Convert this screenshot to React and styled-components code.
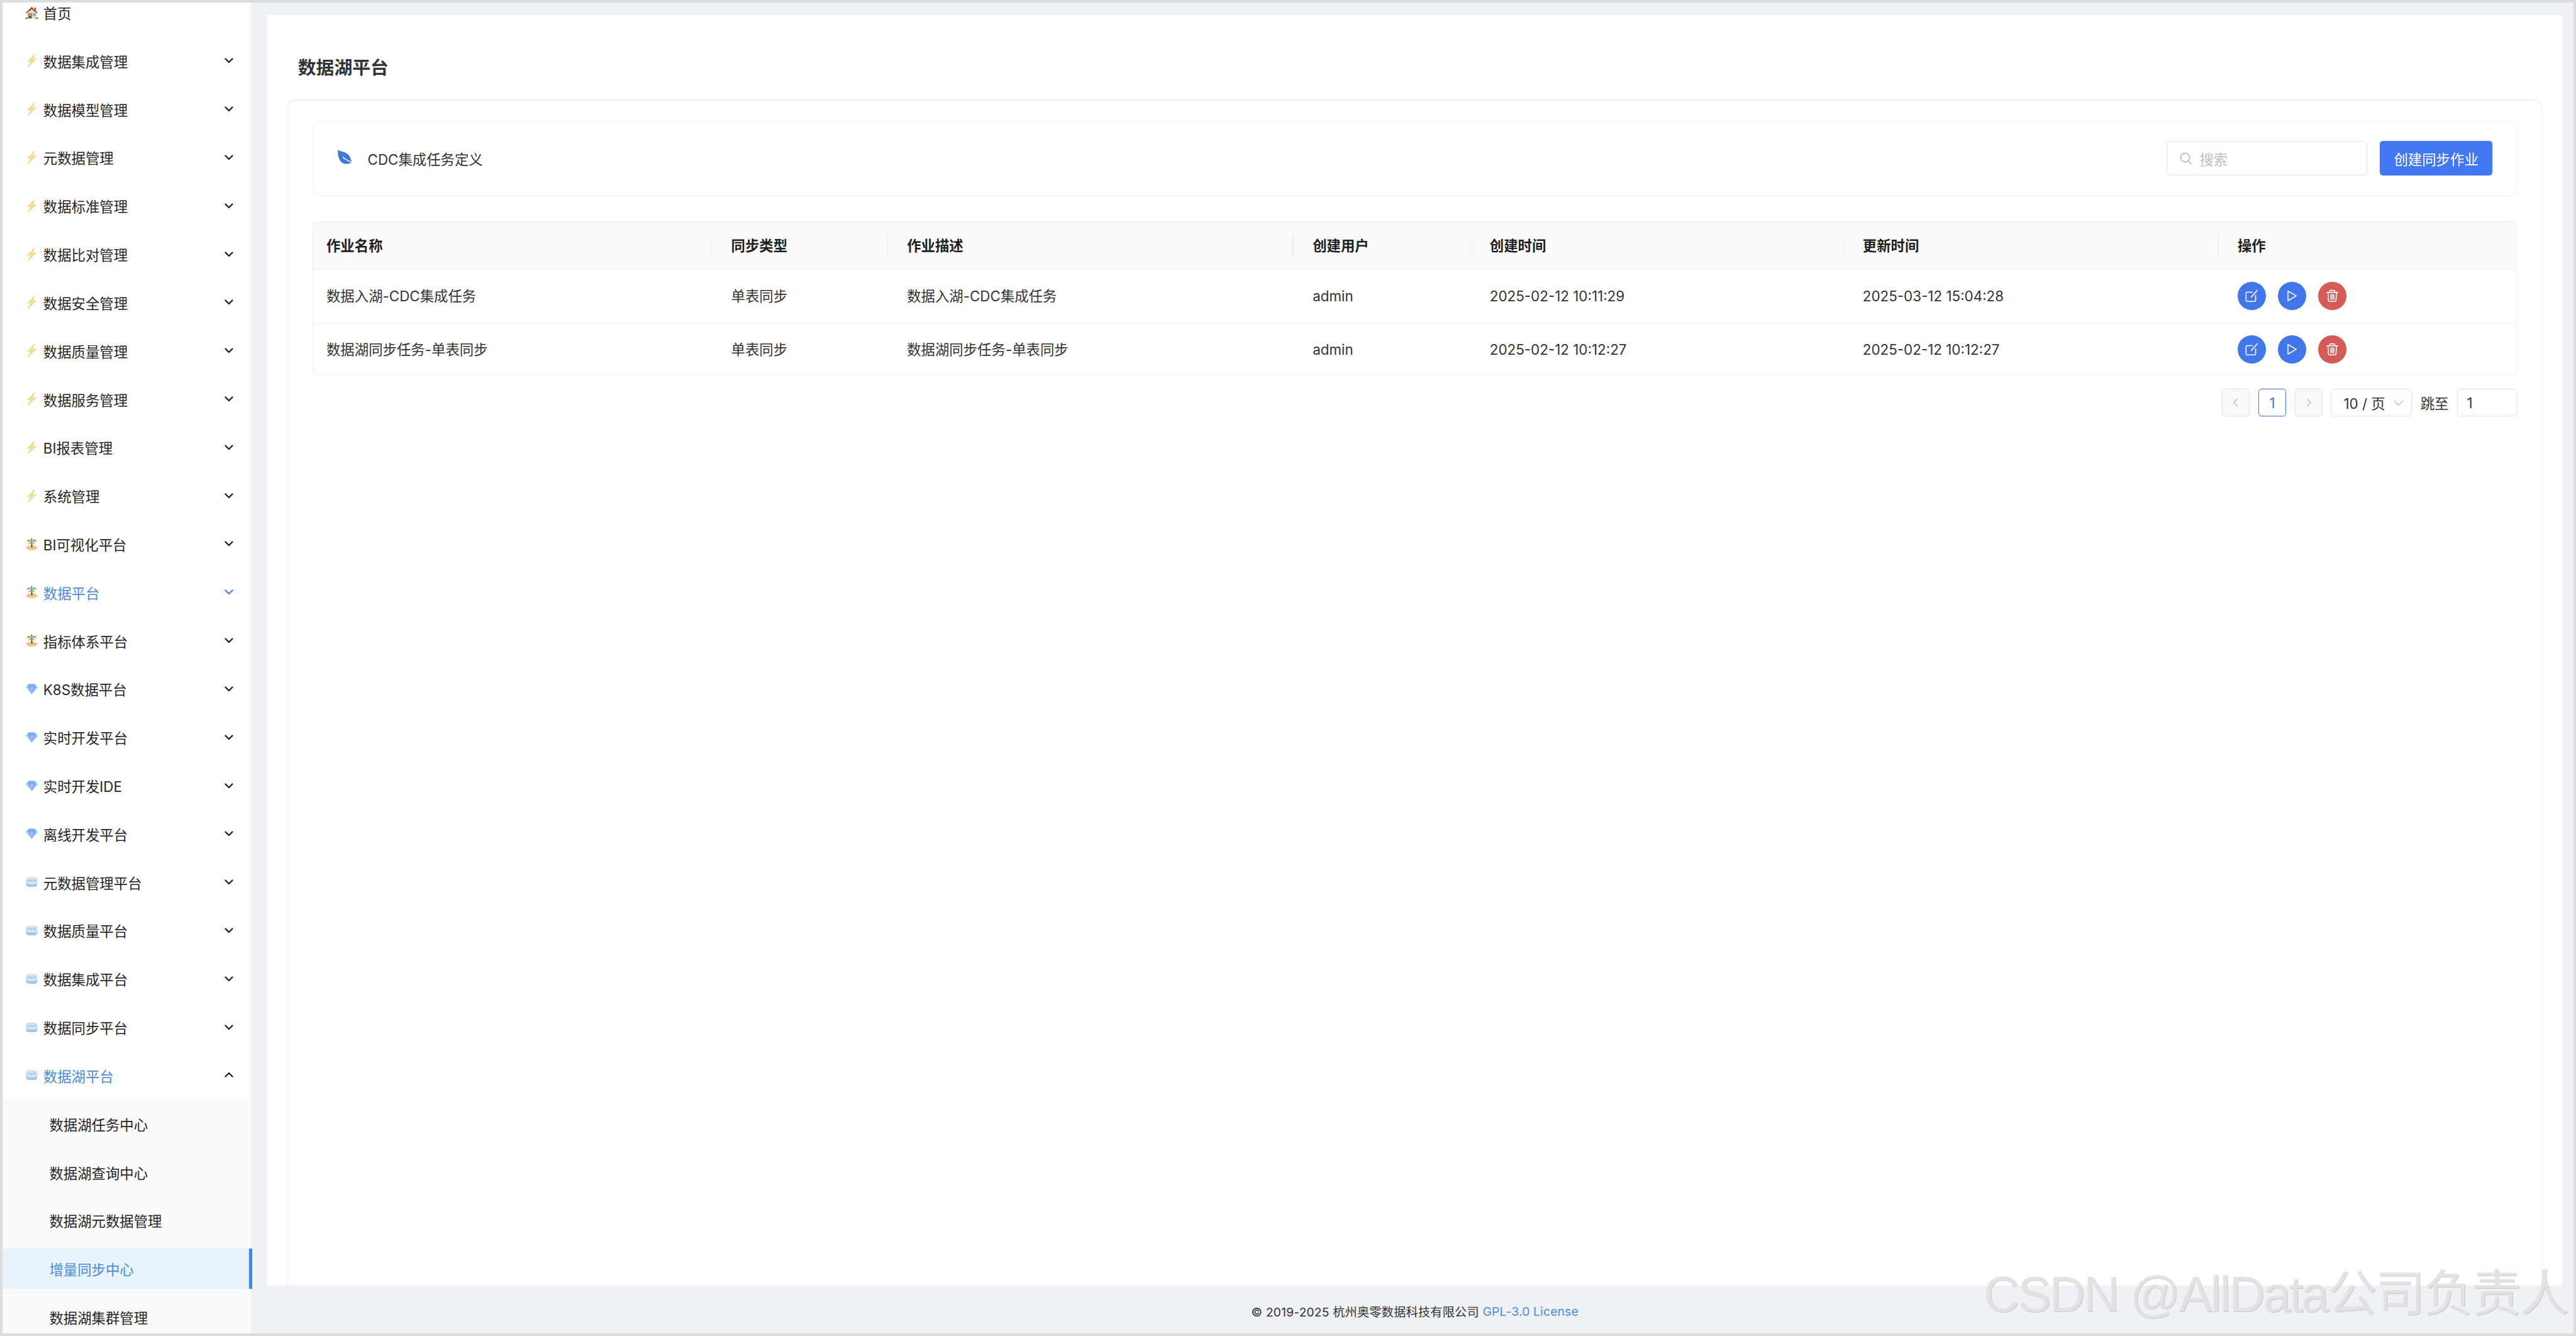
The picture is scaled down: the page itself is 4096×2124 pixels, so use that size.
import React from 'react';
import styled, { createGlobalStyle } from 'styled-components';

const Global = createGlobalStyle`
  html, body { margin: 0; padding: 0; background: #dcdcdc; }
  body { font-family: Inter, "Noto Sans CJK SC", sans-serif; color: #262626; }
  * { box-sizing: border-box; }
`;

const Frame = styled.div`
  position: relative;
  width: 4096px;
  height: 2124px;
  padding: 4px;
  display: flex;
  overflow: hidden;
  background: #dcdcdc;
`;
const Sidebar = styled.nav`
  position: relative;
  z-index: 1;
  flex: 0 0 395.4px;
  background: #fff;
  overflow-y: clip;
  overflow-x: visible;
`;
const Menu = styled.div`
  display: flex;
  flex-direction: column;
  margin-top: -22.4px;
`;
const Row = styled.div`
  flex: 0 0 64px;
  margin: 6.42px 0;
  display: flex;
  align-items: center;
  padding: 0 28.8px 0 36px;
  font-size: 22.4px;
  color: ${p => (p.$active ? '#4a8be0' : '#262626')};
`;
const IconBox = styled.span`
  flex: 0 0 20.8px;
  height: 20.8px;
  margin-right: 8px;
  display: flex;
`;
const Label = styled.span`
  flex: 1;
  white-space: nowrap;
`;
const Chevron = styled.svg`
  width: 14px;
  height: 14px;
  margin-top: -1px;
  fill: none;
  stroke: ${p => (p.$blue ? '#4a80ee' : '#222')};
  stroke-width: 2.4;
  stroke-linecap: round;
  stroke-linejoin: round;
`;
const SubList = styled.div`
  display: flex;
  flex-direction: column;
  background: #fafafa;
`;
const SubRow = styled.div`
  position: relative;
  flex: 0 0 64px;
  margin: 6.42px 0;
  display: flex;
  align-items: center;
  padding-left: 74.4px;
  font-size: 22.4px;
  color: ${p => (p.$active ? '#4a8be0' : '#262626')};
  background: ${p => (p.$active ? '#e7f4fd' : 'transparent')};
  ${p => p.$active && `
    &::after {
      content: '';
      position: absolute;
      top: 0;
      bottom: 0;
      right: -1.6px;
      width: 4.8px;
      background: #4a86e4;
    }
  `}
`;
const Main = styled.main`
  flex: 1;
  min-width: 0;
  display: flex;
  flex-direction: column;
  background: #eff1f4;
`;
const Panel = styled.section`
  flex: 1;
  min-height: 0;
  margin: 20px 17.6px 0 25.6px;
  padding: 0 32.8px 0 32px;
  background: #fff;
  display: flex;
  flex-direction: column;
  overflow: hidden;
`;
const Title = styled.h1`
  flex: 0 0 134.4px;
  margin: 0;
  padding: 61.5px 0 0 16.8px;
  font-size: 28.8px;
  line-height: 44.8px;
  font-weight: 700;
  color: #333;
`;
const Card = styled.div`
  flex: 1;
  border: 1.6px solid #f0f0f0;
  border-bottom: 0;
  border-top-width: 2.4px;
  border-radius: 12.8px 12.8px 0 0;
  padding: 31.2px 38.4px 0 39.2px;
`;
const TopBar = styled.div`
  height: 120px;
  border: 1.6px solid #f0f0f0;
  border-radius: 12.8px;
  display: flex;
  align-items: center;
  padding: 0 38.4px 0 39.2px;
`;
const Leaf = styled.svg`
  width: 25.6px;
  height: 24px;
  margin: -4px 21.6px 0 0;
`;
const BarTitle = styled.span`
  flex: 1;
  font-size: 22.4px;
  color: #333;
`;
const Search = styled.div`
  width: 318.4px;
  height: 54.4px;
  border: 1.6px solid #e3e3e3;
  border-radius: 4.8px;
  display: flex;
  align-items: center;
  gap: 11.2px;
  padding-left: 19.2px;
  margin-right: 20px;
  font-size: 22.4px;
  color: #bfbfbf;
`;
const Primary = styled.button`
  width: 178.4px;
  height: 54.4px;
  border: 0;
  border-radius: 4.8px;
  background: #4177f0;
  color: #fff;
  font: inherit;
  font-size: 22.4px;
  padding: 0;
`;
const Table = styled.div`
  margin-top: 40px;
  border: 1.6px solid #f0f0f0;
  border-radius: 6.4px;
  overflow: hidden;
`;
const Grid = styled.div`
  display: grid;
  grid-template-columns: 643.6px 279.6px 645px 281.6px 593px 596.2px 1fr;
  align-items: center;
  height: ${p => (p.$head ? '75.2px' : '84.8px')};
  background: ${p => (p.$head ? '#fafafb' : '#fff')};
  font-size: 22.4px;
  font-weight: ${p => (p.$head ? 600 : 400)};
  color: ${p => (p.$head ? '#1f1f1f' : '#333')};
  & + & { border-top: 1.6px solid #f0f0f0; }
`;
const Cell = styled.div`
  position: relative;
  padding-left: 20.8px;
  padding-bottom: ${p => (p.$cjk ? '3px' : '0')};
  white-space: nowrap;
  ${p => p.$divider && `
    &::after {
      content: '';
      position: absolute;
      right: 9.6px;
      top: 50%;
      width: 1.6px;
      height: 37.6px;
      margin-top: -18.8px;
      background: #f0f0f0;
    }
  `}
`;
const Actions = styled.div`
  display: flex;
  gap: 19.2px;
  padding-left: 20.8px;
`;
const RoundBtn = styled.button`
  width: 44.8px;
  height: 44.8px;
  border: 0;
  border-radius: 50%;
  padding: 0;
  background: ${p => (p.$danger ? '#d65a55' : '#4177ea')};
  display: flex;
`;
const ActionIcon = styled.svg`
  width: 100%;
  height: 100%;
  fill: none;
  stroke: #fff;
  stroke-width: 2;
  stroke-linecap: round;
  stroke-linejoin: round;
`;
const Pager = styled.div`
  margin-top: 20px;
  display: flex;
  justify-content: flex-end;
  align-items: center;
  gap: 13.6px;
  font-size: 22.4px;
  color: #333;
`;
const PageBtn = styled.div`
  width: 44px;
  height: 44px;
  border: 1.6px solid ${p => (p.$current ? '#3f78c9' : '#e3e3e3')};
  border-radius: 4.8px;
  background: ${p => (p.$disabled ? '#f9f9fa' : '#fff')};
  color: ${p => (p.$current ? '#4177c9' : '#bbb')};
  display: flex;
  align-items: center;
  justify-content: center;
`;
const SizeSelect = styled.div`
  width: 128.8px;
  height: 44px;
  border: 1.6px solid #e3e3e3;
  border-radius: 4.8px;
  display: flex;
  align-items: center;
  justify-content: space-between;
  padding: 0 12px 0 19.2px;
  white-space: nowrap;
`;
const JumpInput = styled.div`
  width: 95.2px;
  height: 44px;
  border: 1.6px solid #e3e3e3;
  border-radius: 4.8px;
  display: flex;
  align-items: center;
  padding-left: 14.4px;
`;
const SmallChevron = styled.svg`
  width: 16px;
  height: 16px;
  fill: none;
  stroke: #bbb;
  stroke-width: 1.3;
`;
const Footer = styled.footer`
  flex: 0 0 76px;
  padding: 6px 0 0 8px;
  display: flex;
  align-items: center;
  justify-content: center;
  font-size: 19.2px;
  letter-spacing: 0.2px;
  color: #333;
  white-space: pre;
`;
const FooterLink = styled.a`
  color: #4a8be0;
`;
const Watermark = styled.div`
  position: absolute;
  left: 3154px;
  top: 2008px;
  font-family: "Liberation Sans", "Noto Sans CJK SC", sans-serif;
  font-size: 79px;
  line-height: 100px;
  letter-spacing: -2.6px;
  white-space: nowrap;
  color: rgba(228, 228, 228, 0.9);
  text-shadow: 1px 1px 0 rgba(140, 140, 140, 0.4);
  pointer-events: none;
`;

const House = () => (
  <svg viewBox="0 0 26 26" width="100%" height="100%">
    <path d="M3.500 24V12L13 3l9.500 9v12z" fill="#f2dcbb" />
    <path d="M.5 13.500 13 1l12.500 12.500H22.500L13 6 3.500 13.500z" fill="#a5523f" />
    <rect x="18.500" y="2.500" width="3" height="6" fill="#a5523f" />
    <rect x="6.500" y="14" width="6.500" height="10" fill="#7d5238" />
    <rect x="8" y="15.500" width="3.500" height="3" fill="#c8d8e0" />
    <rect x="15" y="14" width="6" height="5.500" fill="#8fa9c0" />
    <ellipse cx="3" cy="24" rx="3" ry="1.800" fill="#6f8a5a" />
    <ellipse cx="23" cy="24" rx="3" ry="1.800" fill="#6f8a5a" />
  </svg>
);
const Bolt = () => (
  <svg viewBox="-4 0 26 27" width="100%" height="100%" overflow="visible">
    <path d="M15 0 0 15.500l7.500-1.600L1.500 27 18.500 10l-8 2z" fill="#f8de8e" stroke="#e6c46a" strokeWidth=".8" strokeLinejoin="round" />
  </svg>
);
const Palm = () => (
  <svg viewBox="0 0 26 26" width="100%" height="100%">
    <path d="M1 20c0 3 5 5.500 12 5.500s12-2.500 12-5.500c-4 3-20 3-24 0z" fill="#bfeee6" />
    <ellipse cx="13" cy="19.500" rx="11" ry="4" fill="#f3c573" />
    <path d="M12 8h2l1 11h-3.500z" fill="#8a5a34" />
    <path d="M13 8C9 2 4 3 3.500 9 6 6 9 6 13 8zM13 8c4-6 9-5 9.500 1C20 6 17 6 13 8zM13 8c-2-4-2-6 0-8 2 2 2 4 0 8zM13 8c-4 0-6 3-6 6 2-3 4-4 6-6zM13 8c4 0 6 3 6 6-2-3-4-4-6-6z" fill="#4f9a3c" />
  </svg>
);
const Gem = () => (
  <svg viewBox="0 0 26 26" width="100%" height="100%">
    <path d="M6 3h14l6 7-13 13L0 10z" fill="#b4d6f7" />
    <path d="M7 3h12l3 7-9 13-9-13z" fill="#7dabee" />
    <path d="M9 10h8l-4 11z" fill="#9cc0f3" />
    <path d="M0 10h5l8 13z" fill="#cde5fb" />
  </svg>
);
const Cube = () => (
  <svg viewBox="0 0 26 26" width="100%" height="100%">
    <path d="M3 5c3-2 17-2 20 0 2 4 2 12 0 16-3 2-17 2-20 0-2-4-2-12 0-16z" fill="#bcd9ef" />
    <path d="M4 6c4-1.500 14-1.500 18 0v9c-4 1.500-14 1.500-18 0z" fill="#d4e8f6" />
    <path d="M3 17c5 2 15 2 20 0v4c-3 2-17 2-20 0z" fill="#9dc3e4" />
    <path d="M6 8h3.500v4H6zM11.200 8h3.500v4h-3.500zM16.500 8H20v4h-3.500z" fill="#9fc3e0" />
  </svg>
);
const ICONS = { house: House, bolt: Bolt, palm: Palm, gem: Gem, cube: Cube };

const MENU = [
  ['house', '首页', false],
  ...['数据集成管理', '数据模型管理', '元数据管理', '数据标准管理', '数据比对管理', '数据安全管理', '数据质量管理', '数据服务管理', 'BI报表管理', '系统管理'].map(t => ['bolt', t, true]),
  ...['BI可视化平台', '数据平台', '指标体系平台'].map(t => ['palm', t, true]),
  ...['K8S数据平台', '实时开发平台', '实时开发IDE', '离线开发平台'].map(t => ['gem', t, true]),
  ...['元数据管理平台', '数据质量平台', '数据集成平台', '数据同步平台'].map(t => ['cube', t, true]),
];
const SUBS = ['数据湖任务中心', '数据湖查询中心', '数据湖元数据管理', '增量同步中心', '数据湖集群管理'];
const COLS = ['作业名称', '同步类型', '作业描述', '创建用户', '创建时间', '更新时间', '操作'];
const ROWS = [
  ['数据入湖-CDC集成任务', '单表同步', '数据入湖-CDC集成任务', 'admin', '2025-02-12 10:11:29', '2025-03-12 15:04:28'],
  ['数据湖同步任务-单表同步', '单表同步', '数据湖同步任务-单表同步', 'admin', '2025-02-12 10:12:27', '2025-02-12 10:12:27'],
];

const MenuRow = ({ icon, text, arrow, active, open }) => {
  const Icon = ICONS[icon];
  return (
    <Row $active={active}>
      <IconBox><Icon /></IconBox>
      <Label>{text}</Label>
      {arrow && (
        <Chevron viewBox="0 0 14 14" $blue={active && !open}>
          <path d={open ? 'M1.500 9.500 7 4l5.500 5.500' : 'M1.500 4.500 7 10l5.500-5.500'} />
        </Chevron>
      )}
    </Row>
  );
};

const Actionset = () => (
  <Actions>
    <RoundBtn>
      <ActionIcon viewBox="0 0 56 56">
        <path d="M29 20.700H18.700a2 2 0 0 0-2 2V37a2 2 0 0 0 2 2h15a2 2 0 0 0 2-2V27" />
        <path d="M27 30.500 39 17" />
      </ActionIcon>
    </RoundBtn>
    <RoundBtn>
      <ActionIcon viewBox="0 0 56 56">
        <path d="M20 18.500 36.500 28 20 37.500z" />
      </ActionIcon>
    </RoundBtn>
    <RoundBtn $danger>
      <ActionIcon viewBox="0 0 56 56">
        <path d="M17 21h22M23 21v-2a2 2 0 0 1 2-2h6a2 2 0 0 1 2 2v2M19.500 21l1 16a2 2 0 0 0 2 2h11a2 2 0 0 0 2-2l1-16M25 25v10M28 25v10M31 25v10" />
      </ActionIcon>
    </RoundBtn>
  </Actions>
);

export default function App() {
  return (
    <>
      <Global />
      <Frame>
        <Sidebar>
          <Menu>
            {MENU.map(([icon, text, arrow]) => (
              <MenuRow key={text} icon={icon} text={text} arrow={arrow} active={text === '数据平台'} />
            ))}
            <MenuRow icon="cube" text="数据湖平台" arrow active open />
            <SubList>
              {SUBS.map(s => (
                <SubRow key={s} $active={s === '增量同步中心'}>{s}</SubRow>
              ))}
            </SubList>
          </Menu>
        </Sidebar>
        <Main>
          <Panel>
            <Title>数据湖平台</Title>
            <Card>
              <TopBar>
                <Leaf viewBox="0 0 32 30">
                  <path d="M.5 0C8 6 19 3 24 14c2 5 3 8 5 10-8 6-21 7-26-6C0 12 0 5 .5 0z" fill="#4277dd" />
                  <path d="M10 14c4 5 10 9 21 11" fill="none" stroke="#fff" strokeWidth="2" />
                </Leaf>
                <BarTitle>CDC集成任务定义</BarTitle>
                <Search>
                  <svg width="20" height="20" viewBox="0 0 20 20" fill="none" stroke="#bfbfbf" strokeWidth="1.800">
                    <circle cx="8.500" cy="8.500" r="7" />
                    <path d="m13.500 13.500 5 5.500" />
                  </svg>
                  搜索
                </Search>
                <Primary>创建同步作业</Primary>
              </TopBar>
              <Table>
                <Grid $head>
                  {COLS.map((c, i) => <Cell key={c} $cjk $divider={i < COLS.length - 1}>{c}</Cell>)}
                </Grid>
                {ROWS.map(r => (
                  <Grid key={r[0]}>
                    {r.map((v, i) => <Cell key={i} $cjk={i < 3}>{v}</Cell>)}
                    <Actionset />
                  </Grid>
                ))}
              </Table>
              <Pager>
                <PageBtn $disabled>
                  <SmallChevron viewBox="0 0 16 16"><path d="M10.500 2 5 8l5.500 6" /></SmallChevron>
                </PageBtn>
                <PageBtn $current>1</PageBtn>
                <PageBtn $disabled>
                  <SmallChevron viewBox="0 0 16 16"><path d="M5.500 2 11 8l-5.500 6" /></SmallChevron>
                </PageBtn>
                <SizeSelect>
                  10 / 页
                  <SmallChevron viewBox="0 0 16 16"><path d="M1 5l7 7 7-7" /></SmallChevron>
                </SizeSelect>
                <span>跳至</span>
                <JumpInput>1</JumpInput>
              </Pager>
            </Card>
          </Panel>
          <Footer>
            © 2019-2025 杭州奥零数据科技有限公司 <FooterLink>GPL-3.0 License</FooterLink>
          </Footer>
        </Main>
        <Watermark>CSDN @AllData公司负责人</Watermark>
      </Frame>
    </>
  );
}
